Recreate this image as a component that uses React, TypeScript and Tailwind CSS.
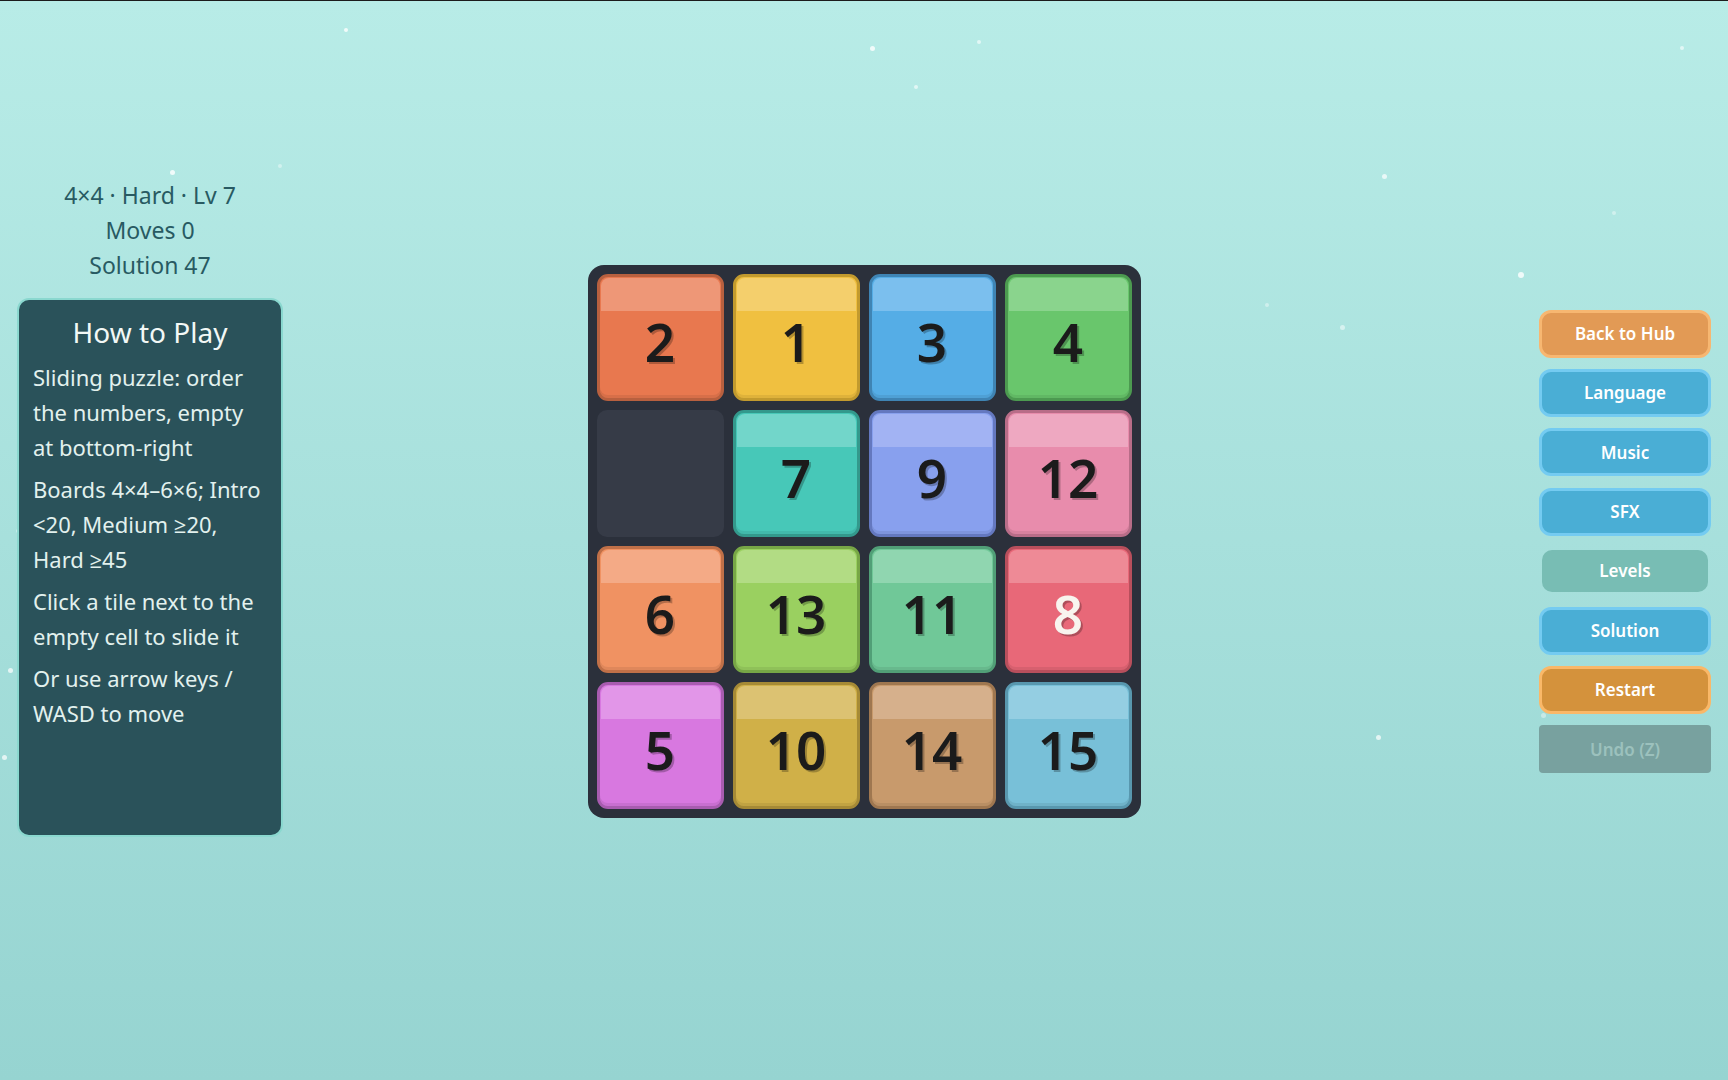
import React from "react";

type Tile = { n: number | null; body: string; hl: string; text?: string };

const tiles: Tile[] = [
  { n: 2, body: "bg-[#e8784f] border-[#b8603f]", hl: "bg-[#ee9777]" },
  { n: 1, body: "bg-[#f0c040] border-[#c29a2e]", hl: "bg-[#f4cf6c]" },
  { n: 3, body: "bg-[#55ade6] border-[#3f84b4]", hl: "bg-[#7bbfee]" },
  { n: 4, body: "bg-[#69c66c] border-[#4c9a50]", hl: "bg-[#8ad48d]" },
  { n: null, body: "", hl: "" },
  { n: 7, body: "bg-[#47c8b8] border-[#33998c]", hl: "bg-[#72d6ca]" },
  { n: 9, body: "bg-[#88a0ee] border-[#6478bf]", hl: "bg-[#a2b3f3]" },
  { n: 12, body: "bg-[#e88cac] border-[#b86d88]", hl: "bg-[#eea8c1]" },
  { n: 6, body: "bg-[#f09262] border-[#c07048]", hl: "bg-[#f4aa86]" },
  { n: 13, body: "bg-[#9ad060] border-[#77a646]", hl: "bg-[#b2dc84]" },
  { n: 11, body: "bg-[#70c898] border-[#519f77]", hl: "bg-[#90d6b0]" },
  { n: 8, body: "bg-[#e86878] border-[#b84f5c]", hl: "bg-[#ee8a96]", text: "text-[#f8f4ee]" },
  { n: 5, body: "bg-[#d878e0] border-[#a85cb0]", hl: "bg-[#e296e8]" },
  { n: 10, body: "bg-[#d0b048] border-[#a68a36]", hl: "bg-[#dcc272]" },
  { n: 14, body: "bg-[#c89a6c] border-[#9f7750]", hl: "bg-[#d6b08c]" },
  { n: 15, body: "bg-[#78c0d8] border-[#5897ae]", hl: "bg-[#94cee2]" },
];

const dots: { x: number; y: number; s: number; o: string }[] = [
  { x: 344, y: 27, s: 4, o: "opacity-80" },
  { x: 870, y: 45, s: 5, o: "opacity-80" },
  { x: 977, y: 39, s: 4, o: "opacity-60" },
  { x: 914, y: 84, s: 4, o: "opacity-60" },
  { x: 1680, y: 45, s: 4, o: "opacity-60" },
  { x: 170, y: 169, s: 5, o: "opacity-80" },
  { x: 278, y: 163, s: 4, o: "opacity-40" },
  { x: 1382, y: 173, s: 5, o: "opacity-70" },
  { x: 1612, y: 210, s: 4, o: "opacity-40" },
  { x: 1518, y: 271, s: 6, o: "opacity-80" },
  { x: 1265, y: 302, s: 4, o: "opacity-40" },
  { x: 1340, y: 324, s: 5, o: "opacity-50" },
  { x: 8, y: 667, s: 5, o: "opacity-70" },
  { x: 2, y: 754, s: 5, o: "opacity-70" },
  { x: 1376, y: 734, s: 5, o: "opacity-70" },
  { x: 1541, y: 712, s: 5, o: "opacity-40" },
  { x: 16, y: 528, s: 4, o: "opacity-40" },
];

function TileView({ t }: { t: Tile }) {
  if (t.n === null) {
    return <div className="h-[127px] w-[127px] rounded-[10px] bg-[#363b47]" />;
  }
  return (
    <div
      className={`relative h-[127px] w-[127px] overflow-hidden rounded-[11px] border-[3px] ${t.body} shadow-[inset_0_-3px_0_rgba(0,0,0,0.07)]`}
    >
      <div className={`absolute left-[1px] right-[1px] top-[1px] h-[33px] rounded-t-[8px] ${t.hl}`} />
      <div
        className={`relative flex h-full w-full items-center justify-center pt-[8px] text-[53px] font-semibold leading-none ${
          t.text ?? "text-[#1b1b1b]"
        } [text-shadow:2px_2px_0_rgba(0,0,0,0.25)]`}
      >
        {t.n}
      </div>
    </div>
  );
}

function Btn({ label, kind }: { label: string; kind: string }) {
  const base = "flex items-center justify-center text-[17px] font-semibold";
  if (kind === "orange")
    return (
      <div className={`${base} h-[48px] w-[172px] rounded-[12px] border-[3px] border-[#f7b771] bg-[#e29a55] text-white`}>
        {label}
      </div>
    );
  if (kind === "orange2")
    return (
      <div className={`${base} h-[48px] w-[172px] rounded-[12px] border-[3px] border-[#fab868] bg-[#d4923c] text-white`}>
        {label}
      </div>
    );
  if (kind === "blue")
    return (
      <div className={`${base} h-[48px] w-[172px] rounded-[12px] border-[3px] border-[#74cbf1] bg-[#4aaed5] text-white`}>
        {label}
      </div>
    );
  if (kind === "teal")
    return (
      <div className="flex h-[48px] w-[172px] items-center justify-center">
        <div className={`${base} h-[42px] w-[166px] rounded-[10px] bg-[#78bdb4] text-white`}>{label}</div>
      </div>
    );
  return (
    <div className={`${base} h-[48px] w-[172px] rounded-[4px] bg-[#78a19f] text-[#9cc1bd]`}>{label}</div>
  );
}

export default function App() {
  return (
    <div
      className="relative h-screen w-full overflow-hidden border-t border-[#1c1c1c] bg-gradient-to-b from-[#b8ece7] to-[#96d4d1]"
      style={{ fontFamily: '"Noto Sans", "Open Sans", sans-serif' }}
    >
      {dots.map((d, i) => (
        <div
          key={i}
          className={`absolute rounded-full bg-white ${d.o}`}
          style={{ left: d.x, top: d.y, width: d.s, height: d.s }}
        />
      ))}

      <div className="relative grid h-full grid-cols-[1fr_auto_1fr]">
        {/* left column */}
        <div className="pl-[17px] pt-[177px]">
          <div className="w-[266px]">
            <div className="text-center text-[23px] leading-[35px] text-[#285a62]">
              <div>4×4 · Hard · Lv 7</div>
              <div>Moves 0</div>
              <div>Solution 47</div>
            </div>
            <div className="mt-[15px] h-[539px] rounded-[12px] border-2 border-[#8ad8cf] bg-[#2a525a] px-[14px] pt-[13px]">
              <div className="text-center text-[28px] leading-[38px] text-[#f2f8f6]">How to Play</div>
              <div className="mt-[9px] flex flex-col gap-[7px] text-[22px] leading-[35px] text-[#e2f1ee]">
                <p>
                  Sliding puzzle: order
                  <br />
                  the numbers, empty
                  <br />
                  at bottom-right
                </p>
                <p>
                  Boards 4×4–6×6; Intro
                  <br />
                  &lt;20, Medium ≥20,
                  <br />
                  Hard ≥45
                </p>
                <p>
                  Click a tile next to the
                  <br />
                  empty cell to slide it
                </p>
                <p>
                  Or use arrow keys /
                  <br />
                  WASD to move
                </p>
              </div>
            </div>
          </div>
        </div>

        {/* board */}
        <div className="self-center">
          <div className="mt-[2px] grid grid-cols-4 gap-[9px] rounded-[16px] bg-[#2b303b] p-[9px]">
            {tiles.map((t, i) => (
              <TileView key={i} t={t} />
            ))}
          </div>
        </div>

        {/* right column */}
        <div className="flex items-center justify-end pr-[17px]">
          <div className="mt-[2px] flex flex-col gap-[11.4px]">
            <Btn label="Back to Hub" kind="orange" />
            <Btn label="Language" kind="blue" />
            <Btn label="Music" kind="blue" />
            <Btn label="SFX" kind="blue" />
            <Btn label="Levels" kind="teal" />
            <Btn label="Solution" kind="blue" />
            <Btn label="Restart" kind="orange2" />
            <Btn label="Undo (Z)" kind="gray" />
          </div>
        </div>
      </div>
    </div>
  );
}
